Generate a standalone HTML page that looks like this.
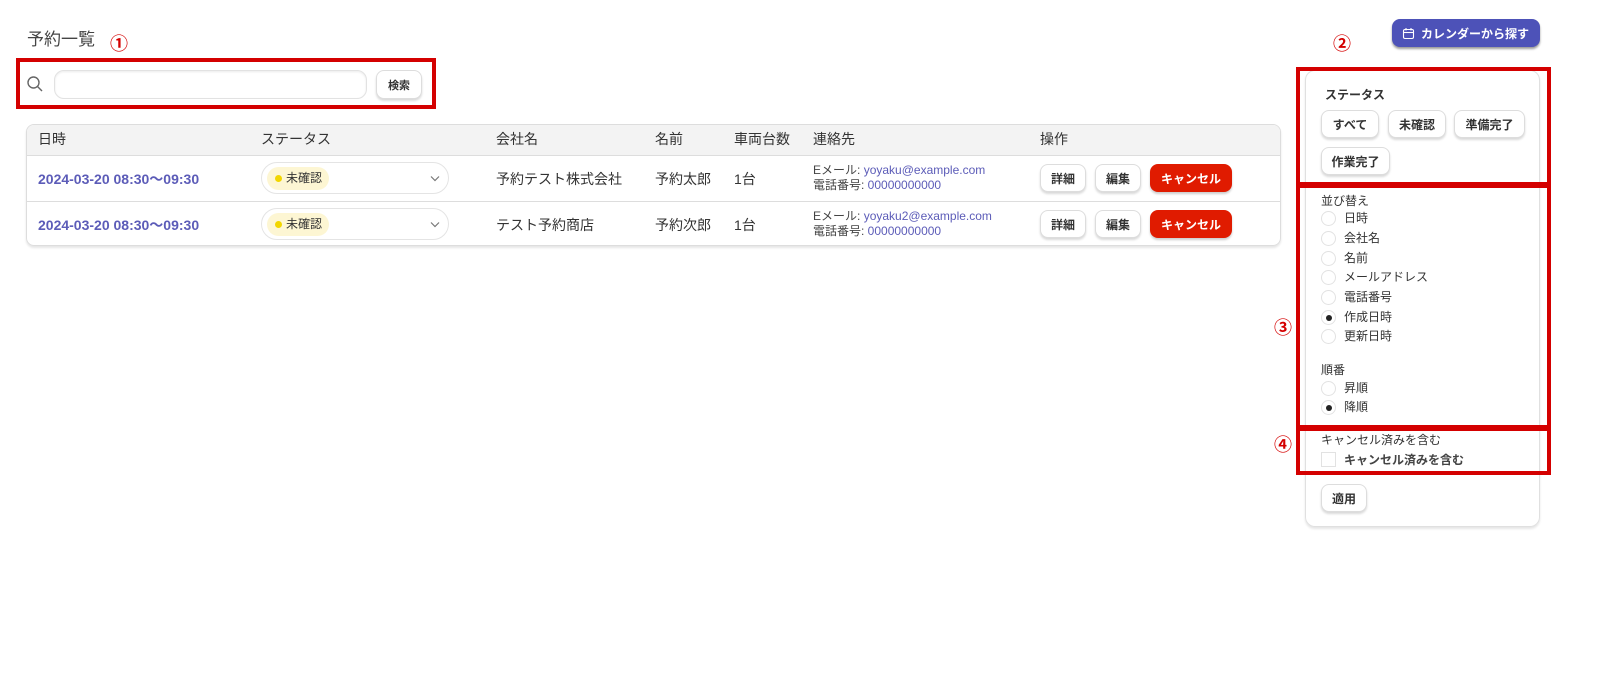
<!DOCTYPE html>
<html><head><meta charset="utf-8">
<style>
*{box-sizing:border-box;margin:0;padding:0}
body{width:1600px;height:674px;background:#fff;position:relative;font-family:"Liberation Sans","Noto Sans CJK JP",sans-serif;color:#333;overflow:hidden}
.a{position:absolute}
.red{position:absolute;border:4px solid #d40000}
.num{position:absolute;color:#d40000;font-weight:bold;font-size:18px;line-height:18px}
.btn{position:absolute;background:#fff;border:1px solid #ddd;border-radius:8px;box-shadow:0 2px 2px rgba(0,0,0,.15);font-size:12px;font-weight:bold;color:#333;display:flex;align-items:center;justify-content:center}
.th{position:absolute;top:129px;font-size:14px;color:#333}
.td{position:absolute;font-size:14px;color:#333}
.date{position:absolute;font-size:14px;font-weight:bold;color:#5c5cb8}
.sel{position:absolute;width:188px;height:32px;border:1px solid #e4e4e4;border-radius:16px;background:#fff}
.badge{position:absolute;left:5px;top:4px;width:62px;height:23px;border-radius:12px;background:#fdf6d3;font-size:12px;color:#333;line-height:23px;padding-left:19px}
.badge:before{content:"";position:absolute;left:8px;top:8px;width:7px;height:7px;border-radius:50%;background:#f2d600}
.chev{position:absolute;right:8px;top:12px}
.cont{position:absolute;font-size:12px;line-height:15px;color:#444}
.cont span{color:#5c5cb8}
.cancel{position:absolute;background:#e01b00;color:#fff;border-radius:8px;font-size:12px;font-weight:bold;display:flex;align-items:center;justify-content:center;box-shadow:0 2px 2px rgba(0,0,0,.2)}
.radio{position:absolute;left:1321px;width:15px;height:15px;border:1px solid #e2e2e2;border-radius:50%;background:#fff}
.radio.on:after{content:"";position:absolute;left:3.5px;top:3.5px;width:6px;height:6px;border-radius:50%;background:#222}
.rl{position:absolute;left:1344px;font-size:12px;color:#333;line-height:15px}
</style></head><body>
<div class="a" style="left:27px;top:25px;font-size:17px;color:#444">予約一覧</div>
<div class="num" style="left:110px;top:35px">①</div>
<div class="red" style="left:16px;top:58px;width:420px;height:51px"></div>
<svg class="a" style="left:26px;top:75px" width="18" height="18" viewBox="0 0 18 18"><circle cx="7.5" cy="7.5" r="5.5" fill="none" stroke="#666" stroke-width="1.4"/><line x1="11.5" y1="11.5" x2="16" y2="16" stroke="#666" stroke-width="1.4"/></svg>
<div class="a" style="left:54px;top:70px;width:313px;height:29px;border:1px solid #e2e2e2;border-radius:10px;box-shadow:inset 0 1px 2px rgba(0,0,0,.08)"></div>
<div class="btn" style="left:376px;top:70px;width:46px;height:29px;font-size:11px">検索</div>

<div class="a" style="left:26px;top:124px;width:1255px;height:122px;border:1px solid #ddd;border-radius:8px;box-shadow:0 2px 2px rgba(0,0,0,.1);overflow:hidden">
 <div class="a" style="left:0;top:0;width:100%;height:31px;background:#f3f3f3;border-bottom:1px solid #ddd"></div>
 <div class="a" style="left:0;top:76px;width:100%;height:1px;background:#ddd"></div>
</div>
<div class="th" style="left:38px">日時</div>
<div class="th" style="left:261px">ステータス</div>
<div class="th" style="left:496px">会社名</div>
<div class="th" style="left:655px">名前</div>
<div class="th" style="left:734px">車両台数</div>
<div class="th" style="left:813px">連絡先</div>
<div class="th" style="left:1040px">操作</div>

<div class="date" style="left:38px;top:169px">2024-03-20 08:30〜09:30</div>
<div class="sel" style="left:261px;top:162px"><div class="badge">未確認</div><svg class="chev" width="10" height="7" viewBox="0 0 10 7"><path d="M1 1.5L5 5.5L9 1.5" fill="none" stroke="#777" stroke-width="1.2"/></svg></div>
<div class="td" style="left:496px;top:169px">予約テスト株式会社</div>
<div class="td" style="left:655px;top:169px">予約太郎</div>
<div class="td" style="left:734px;top:169px">1台</div>
<div class="cont" style="left:813px;top:163px">Eメール: <span>yoyaku@example.com</span><br>電話番号: <span>00000000000</span></div>
<div class="btn" style="left:1040px;top:164px;width:46px;height:28px">詳細</div>
<div class="btn" style="left:1095px;top:164px;width:46px;height:28px">編集</div>
<div class="cancel" style="left:1150px;top:164px;width:82px;height:28px">キャンセル</div>

<div class="date" style="left:38px;top:215px">2024-03-20 08:30〜09:30</div>
<div class="sel" style="left:261px;top:208px"><div class="badge">未確認</div><svg class="chev" width="10" height="7" viewBox="0 0 10 7"><path d="M1 1.5L5 5.5L9 1.5" fill="none" stroke="#777" stroke-width="1.2"/></svg></div>
<div class="td" style="left:496px;top:215px">テスト予約商店</div>
<div class="td" style="left:655px;top:215px">予約次郎</div>
<div class="td" style="left:734px;top:215px">1台</div>
<div class="cont" style="left:813px;top:209px">Eメール: <span>yoyaku2@example.com</span><br>電話番号: <span>00000000000</span></div>
<div class="btn" style="left:1040px;top:210px;width:46px;height:28px">詳細</div>
<div class="btn" style="left:1095px;top:210px;width:46px;height:28px">編集</div>
<div class="cancel" style="left:1150px;top:210px;width:82px;height:28px">キャンセル</div>

<div class="a" style="left:1392px;top:19px;width:148px;height:28px;background:#4d52b8;border-radius:8px;box-shadow:0 2px 2px rgba(0,0,0,.4);color:#fff;font-size:12px;font-weight:bold;display:flex;align-items:center;padding-left:10px">
<svg width="13" height="13" viewBox="0 0 13 13" style="margin-right:6px"><rect x="1.5" y="2.5" width="10" height="9" rx="1.5" fill="none" stroke="#fff" stroke-width="1.1"/><line x1="1.5" y1="5.5" x2="11.5" y2="5.5" stroke="#fff" stroke-width="1.1"/><line x1="4" y1="1" x2="4" y2="3.5" stroke="#fff" stroke-width="1.1"/><line x1="9" y1="1" x2="9" y2="3.5" stroke="#fff" stroke-width="1.1"/></svg>カレンダーから探す</div>
<div class="num" style="left:1333px;top:35px">②</div>

<div class="a" style="left:1305px;top:70px;width:235px;height:457px;border:1px solid #e0e0e0;border-radius:10px;box-shadow:0 2px 2px rgba(0,0,0,.1)"></div>
<div class="a" style="left:1325px;top:86px;font-size:12px;font-weight:bold">ステータス</div>
<div class="btn" style="left:1321px;top:110px;width:58px;height:28px">すべて</div>
<div class="btn" style="left:1388px;top:110px;width:58px;height:28px">未確認</div>
<div class="btn" style="left:1454px;top:110px;width:71px;height:28px">準備完了</div>
<div class="btn" style="left:1321px;top:147px;width:69px;height:28px">作業完了</div>

<div class="a" style="left:1321px;top:192px;font-size:12px">並び替え</div>
<div class="radio" style="top:211px"></div><div class="rl" style="top:211px">日時</div>
<div class="radio" style="top:231px"></div><div class="rl" style="top:231px">会社名</div>
<div class="radio" style="top:251px"></div><div class="rl" style="top:251px">名前</div>
<div class="radio" style="top:270px"></div><div class="rl" style="top:270px">メールアドレス</div>
<div class="radio" style="top:290px"></div><div class="rl" style="top:290px">電話番号</div>
<div class="radio on" style="top:310px"></div><div class="rl" style="top:310px">作成日時</div>
<div class="radio" style="top:329px"></div><div class="rl" style="top:329px">更新日時</div>
<div class="a" style="left:1321px;top:361px;font-size:12px">順番</div>
<div class="radio" style="top:381px"></div><div class="rl" style="top:381px">昇順</div>
<div class="radio on" style="top:400px"></div><div class="rl" style="top:400px">降順</div>
<div class="a" style="left:1321px;top:431px;font-size:12px">キャンセル済みを含む</div>
<div class="a" style="left:1321px;top:452px;width:15px;height:15px;border:1px solid #e2e2e2"></div>
<div class="a" style="left:1344px;top:451px;font-size:12px;font-weight:bold;color:#444">キャンセル済みを含む</div>
<div class="btn" style="left:1321px;top:484px;width:46px;height:28px">適用</div>

<div class="red" style="left:1296px;top:67px;width:255px;height:119px"></div>
<div class="red" style="left:1296px;top:184px;width:255px;height:245px"></div>
<div class="red" style="left:1296px;top:427px;width:255px;height:48px"></div>
<div class="num" style="left:1274px;top:319px">③</div>
<div class="num" style="left:1274px;top:436px">④</div>
</body></html>
